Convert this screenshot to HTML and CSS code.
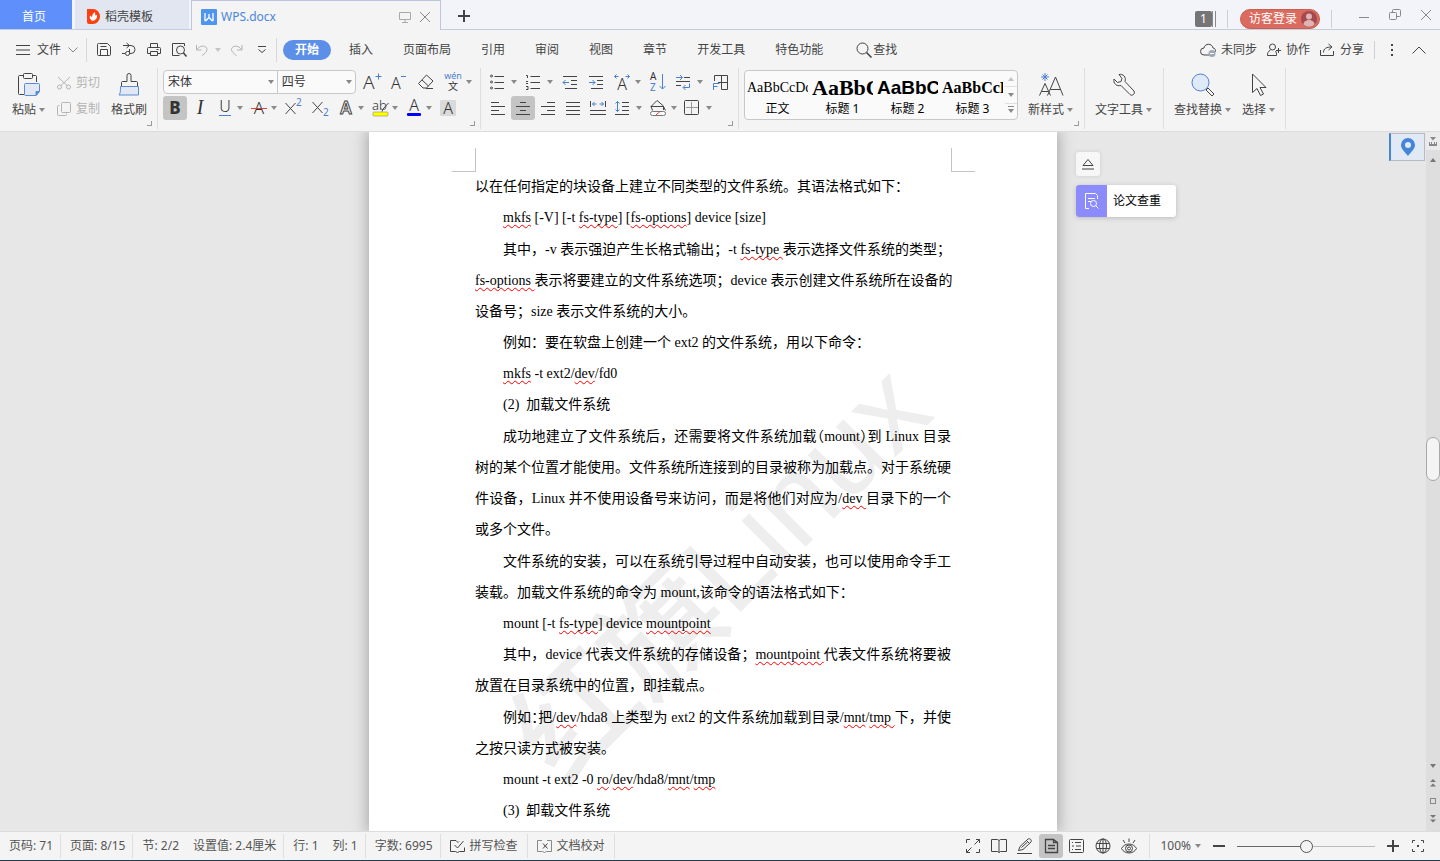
FILE: index.html
```html
<!DOCTYPE html>
<html lang="zh-CN">
<head>
  <meta charset="UTF-8">
  <meta name="viewport" content="width=device-width, initial-scale=1.0">
  <title>WPS.docx</title>
  <link rel="stylesheet" href="styles.css">
</head>
<body>
  <!-- Title bar -->
  <header class="titlebar">
    <button class="tab tab-home">首页</button>
    <button class="tab tab-docer">
      <svg width="13" height="15" viewBox="0 0 13 15"><path d="M0 0h6a7 7.500 0 0 1 0 15H2a2 2 0 0 1-2-2z" fill="#fb4012"/><path d="M6 12C2.500 10.500 2.500 8 3 6.500c1 .500 1.500 1 2 2C5 6 6 4 8 3c0 1.500.500 2 .200 3.500L10 6c.500 3-1 5-4 6z" fill="#fff"/></svg>
      <span>稻壳模板</span>
    </button>
    <div class="tab tab-doc">
      <svg width="16" height="16" viewBox="0 0 16 16"><rect width="16" height="16" rx="1" fill="#4f95f0"/><path d="M4 4v7.500h1L8 8.500l3 3h1V4M8 5v3.500" fill="none" stroke="#fff" stroke-width="1.300"/></svg>
      <span class="doc-name">WPS.docx</span>
      <button class="plain" aria-label="窗口"><svg class="icon pale" width="12" height="12" viewBox="0 0 12 12"><path d="M.5 1.500h11v7H.5zM6 8.500V11M3 11.500h6"/></svg></button>
      <button class="plain" aria-label="关闭标签"><svg class="icon grey" width="12" height="12" viewBox="0 0 12 12"><path d="M1 1l10 10M11 1L1 11"/></svg></button>
    </div>
    <button class="plain add-tab" aria-label="新建"><svg class="icon" width="12" height="12" viewBox="0 0 12 12"><path d="M6 0v12M0 6h12" stroke-width="2"/></svg></button>
    <div class="window-tools">
      <span class="badge">1</span><span class="badge-bars"></span>
      <span class="rule"></span>
      <button class="login">访客登录
        <svg width="16" height="16" viewBox="0 0 16 16"><circle cx="8" cy="8" r="8" fill="#a34a4e"/><circle cx="8" cy="5.500" r="3" fill="#e0b4b4"/><path d="M2.500 13.500c0-6 11-6 11 0a8 8 0 0 1-11 0z" fill="#e0b4b4"/></svg>
      </button>
      <span class="rule"></span>
      <div class="window-buttons">
        <button class="plain" aria-label="最小化"><svg class="icon grey" width="12" height="12" viewBox="0 0 12 12"><path d="M1 8.500h10"/></svg></button>
        <button class="plain" aria-label="还原"><svg class="icon grey" width="12" height="12" viewBox="0 0 12 12"><rect x=".5" y="3.500" width="7" height="7" rx="1"/><path d="M3.500 3.500v-2a1 1 0 0 1 1-1h6a1 1 0 0 1 1 1v5a1 1 0 0 1-1 1h-3"/></svg></button>
        <button class="plain" aria-label="关闭"><svg class="icon grey" width="12" height="12" viewBox="0 0 12 12"><path d="M1 1l10 10M11 1L1 11"/></svg></button>
      </div>
    </div>
  </header>

  <!-- Menu row -->
  <nav class="menubar">
    <button class="plain file-menu">
      <svg class="icon" width="14" height="10" viewBox="0 0 14 10"><path d="M0 .5h14M0 5h14M0 9.500h14"/></svg>
      <span>文件</span>
      <svg class="icon grey" width="10" height="6" viewBox="0 0 10 6"><path d="M.5.5L5 5 9.500.5"/></svg>
    </button>
    <div class="quick">
      <button class="tool" aria-label="保存"><svg class="icon" width="16" height="16" viewBox="0 0 16 16"><path d="M3.500 1.500h8l3 3v8a1 1 0 0 1-1 1h-11a1 1 0 0 1-1-1v-10a1 1 0 0 1 1-1zM4.500 13.500v-6h7v6M4.500 4.500h6"/></svg></button>
      <button class="tool" aria-label="输出"><svg class="icon" width="16" height="16" viewBox="0 0 16 16"><path d="M2 3.500h8a4 4 0 0 1 0 8H8M5.500 1l3 2.500-3 2.500M8.500 7v4.500a2 2 0 1 1-2-2h2M1 11.500h3"/></svg></button>
      <button class="tool" aria-label="打印"><svg class="icon" width="16" height="16" viewBox="0 0 16 16"><path d="M4.500 5V1.500h7V5M4 11.500H1.500V6.500a1 1 0 0 1 1-1h11a1 1 0 0 1 1 1v5H12M4.500 9.500h7v4h-7zM10.500 7.500h2"/></svg></button>
      <button class="tool" aria-label="打印预览"><svg class="icon" width="16" height="16" viewBox="0 0 16 16"><path d="M13.500 4v-2.500h-12v12h7"/><circle cx="9.500" cy="8" r="4"/><path d="M12.500 11l3 3.500" stroke-width="1.600"/></svg></button>
      <button class="tool drop off" aria-label="撤销"><svg class="icon" width="14" height="16" viewBox="0 0 14 16"><path d="M1.500 3v5h5M2 7.500c3-5 10-4 10 0 0 2-2 4-5 6"/></svg><i class="caret faint"></i></button>
      <button class="tool off" aria-label="恢复"><svg class="icon" width="14" height="16" viewBox="0 0 14 16"><path d="M12 3v5H7M11.500 7.500c-3-5-10-4-10 0 0 2 2 4 5 6"/></svg></button>
      <button class="tool" aria-label="更多"><svg class="icon" width="8" height="8" viewBox="0 0 8 8"><path d="M0 .5h8M.5 3.500L4 6.500l3.500-3"/></svg></button>
    </div>
    <div class="menus">
      <button class="menu active">开始</button>
      <button class="menu">插入</button>
      <button class="menu">页面布局</button>
      <button class="menu">引用</button>
      <button class="menu">审阅</button>
      <button class="menu">视图</button>
      <button class="menu">章节</button>
      <button class="menu">开发工具</button>
      <button class="menu">特色功能</button>
    </div>
    <button class="plain find"><svg class="icon" width="16" height="16" viewBox="0 0 16 16"><circle cx="6.500" cy="6.500" r="5.500"/><path d="M10.500 10.500l5 5" stroke-width="1.600"/></svg>查找</button>
    <div class="share">
      <button class="plain"><svg class="icon" width="16" height="14" viewBox="0 0 16 14"><path d="M9 12H4a3.500 3.500 0 0 1 0-7c1-5 8-5 9 0 2 0 3 2 2 4"/><circle cx="12" cy="10.500" r="3.500" fill="#9fa8b8" stroke="none"/><path d="M10 10.500h4" stroke="#fff"/></svg>未同步</button>
      <button class="plain"><svg class="icon" width="14" height="14" viewBox="0 0 14 14"><circle cx="5.500" cy="4" r="3"/><path d="M3.500 7C1 8.500.5 10 .5 12.500h9c0-2 0-3-1-4.500M9 7.500h5M11.500 5v5"/></svg>协作</button>
      <button class="plain"><svg class="icon" width="15" height="14" viewBox="0 0 15 14"><path d="M.5 7v5.500h13V8M3.500 9.500c0-4 3-5.500 8-5.500M8.500 1l3.500 3-3.500 3"/></svg>分享</button>
      <span class="rule"></span>
      <button class="plain" aria-label="菜单"><svg width="3" height="12" viewBox="0 0 3 12" fill="#444"><path d="M0 0h2v2H0zM0 5h2v2H0zM0 10h2v2H0z"/></svg></button>
      <button class="plain" aria-label="收起功能区"><svg class="icon" width="14" height="8" viewBox="0 0 14 8"><path d="M.5 7.500L7 1l6.500 6.500"/></svg></button>
    </div>
  </nav>

  <!-- Ribbon -->
  <section class="ribbon">
    <div class="group clipboard">
      <button class="big">
        <svg class="icon" width="26" height="26" viewBox="0 0 26 26"><path d="M7 3.500H3.500a1 1 0 0 0-1 1v17a1 1 0 0 0 1 1H8M17 3.500h2.500a1 1 0 0 1 1 1V10"/><rect x="7.500" y="1.500" width="9" height="5" rx="1"/><path d="M9.500 11.500h13a1 1 0 0 1 1 1v7l-3.500 4H9.500a1 1 0 0 1-1-1v-10a1 1 0 0 1 1-1z" fill="#e1e8f3" stroke="#5a8bd6"/><path d="M20 23.500v-4h3.500z" fill="#5a8bd6" stroke="#5a8bd6"/></svg>
        <span>粘贴<i class="caret"></i></span>
      </button>
      <div class="stack">
        <button class="plain off"><svg class="icon" width="16" height="16" viewBox="0 0 16 16"><circle cx="3.500" cy="12" r="2"/><circle cx="12.500" cy="12" r="2"/><path d="M2 2l9 8.500M14 2L5 10.500"/></svg>剪切</button>
        <button class="plain off"><svg class="icon" width="16" height="16" viewBox="0 0 16 16"><rect x="5.500" y="1.500" width="9" height="10" rx="1"/><path d="M3.500 4.500h-1a1 1 0 0 0-1 1v8a1 1 0 0 0 1 1h7a1 1 0 0 0 1-1v-1"/></svg>复制</button>
      </div>
      <button class="big">
        <svg class="icon" width="26" height="26" viewBox="0 0 26 26"><path d="M5.500 14v-3.500a1 1 0 0 1 1-1H11V3.500a2 2 0 0 1 4 0v6h5.500a1 1 0 0 1 1 1V14"/><path d="M4.500 14.500h18v8.500H3c1.500-2 1.500-4 1.500-8.500z" fill="#e1e8f3" stroke="#5a8bd6"/></svg>
        <span>格式刷</span>
      </button>
      <i class="launcher"></i>
    </div>

    <div class="group font">
      <div class="tools spaced">
        <select class="font-name" aria-label="字体"><option>宋体</option></select><select class="font-size" aria-label="字号"><option>四号</option></select>
        <button class="tool" aria-label="增大字号"><svg class="icon" width="20" height="20" viewBox="0 0 20 20"><text x="1" y="17" class="glyph lg">A</text><path d="M13.500 4.500h6M16.500 1.500v6" stroke="#4a7fd0"/></svg></button>
        <button class="tool" aria-label="减小字号"><svg class="icon" width="20" height="20" viewBox="0 0 20 20"><text x="2" y="17" class="glyph md">A</text><path d="M12 4.500h5" stroke="#4a7fd0"/></svg></button>
        <button class="tool" aria-label="清除格式"><svg class="icon" width="18" height="18" viewBox="0 0 18 18"><path d="M1.500 10.500l8-8.500 6.500 6-6.500 7H6zM5 7l6.500 6M9 15.500h7"/></svg></button>
        <button class="tool drop" aria-label="拼音指南"><svg class="icon" width="18" height="20" viewBox="0 0 18 20"><text x="9" y="7" text-anchor="middle" class="glyph tiny blue">wén</text><text x="9" y="18" text-anchor="middle" class="glyph xs">文</text></svg><i class="caret"></i></button>
      </div>
      <div class="tools snug">
        <button class="tool on" aria-label="加粗"><svg width="18" height="20" viewBox="0 0 18 20"><text x="9" y="16" text-anchor="middle" class="glyph bold">B</text></svg></button>
        <button class="tool" aria-label="倾斜"><svg width="18" height="20" viewBox="0 0 18 20"><text x="9" y="16" text-anchor="middle" class="glyph italic">I</text></svg></button>
        <button class="tool drop" aria-label="下划线"><svg class="icon" width="18" height="20" viewBox="0 0 18 20"><text x="9" y="14" text-anchor="middle" class="glyph md">U</text><path d="M3 17.500h12" stroke="#4a7fd0"/></svg><i class="caret"></i></button>
        <button class="tool drop" aria-label="删除线"><svg class="icon" width="18" height="20" viewBox="0 0 18 20"><text x="9" y="16" text-anchor="middle" class="glyph">A</text><path d="M1 10.500h16" stroke="#d8433b"/></svg><i class="caret"></i></button>
        <button class="tool" aria-label="上标"><svg class="icon" width="20" height="20" viewBox="0 0 20 20"><path d="M2.500 5l10 11M12.500 5l-10 11"/><text x="13" y="8" class="glyph xs blue">2</text></svg></button>
        <button class="tool wide" aria-label="下标"><svg class="icon" width="20" height="20" viewBox="0 0 20 20"><path d="M2.500 4l10 11M12.500 4l-10 11"/><text x="13" y="18" class="glyph xs blue">2</text></svg></button>
        <button class="tool drop" aria-label="文字效果"><svg class="icon" width="18" height="20" viewBox="0 0 18 20"><text x="9" y="16" text-anchor="middle" class="glyph outline">A</text></svg><i class="caret"></i></button>
        <button class="tool drop" aria-label="突出显示"><svg class="icon" width="18" height="20" viewBox="0 0 18 20"><text x="1" y="12" class="glyph sm">ab</text><path d="M17.500 5L12 11l-1 2.500"/><rect x="2" y="14" width="15" height="4" rx="1" fill="#ffff00" stroke="#777" stroke-width=".5"/></svg><i class="caret"></i></button>
        <button class="tool drop" aria-label="字体颜色"><svg class="icon" width="18" height="20" viewBox="0 0 18 20"><text x="9" y="13" text-anchor="middle" class="glyph md">A</text><rect x="2" y="15" width="14" height="3" rx="1" fill="#0000ff" stroke="none"/></svg><i class="caret"></i></button>
        <button class="tool" aria-label="字符底纹"><svg width="18" height="20" viewBox="0 0 18 20"><rect x="1" y="2" width="16" height="16" rx="1" fill="#dadada"/><text x="9" y="16" text-anchor="middle" class="glyph md">A</text></svg></button>
      </div>
      <i class="launcher"></i>
    </div>

    <div class="group paragraph">
      <div class="tools loose">
        <button class="tool drop" aria-label="项目符号"><svg class="icon" width="16" height="16" viewBox="0 0 16 16"><circle cx="2.500" cy="2" r="1"/><circle cx="2.500" cy="8" r="1"/><circle cx="2.500" cy="14" r="1"/><path d="M5.500 2.500H15M5.500 8.500H15M5.500 14.500H15"/></svg><i class="caret"></i></button>
        <button class="tool drop" aria-label="编号"><svg class="icon" width="16" height="16" viewBox="0 0 16 16"><path d="M1 1.500h1.500V4M1 7.500h2M1 9.500h2M1 12.500h2v3H1M5.500 2.500H15M5.500 8.500H15M5.500 14.500H15"/></svg><i class="caret"></i></button>
        <button class="tool" aria-label="减少缩进"><svg class="icon" width="16" height="16" viewBox="0 0 16 16"><path d="M1 2.500h14M9 6.500h6M9 10.500h6M3 14.500h12"/><path d="M1 8.500h6M3.500 6L1 8.500 3.500 11" stroke="#4a7fd0"/></svg></button>
        <button class="tool" aria-label="增加缩进"><svg class="icon" width="16" height="16" viewBox="0 0 16 16"><path d="M1 2.500h14M9 6.500h6M9 10.500h6M3 14.500h12"/><path d="M1 8.500h6M4.500 6L7 8.500 4.500 11" stroke="#4a7fd0"/></svg></button>
        <button class="tool drop" aria-label="字符缩放"><svg class="icon" width="18" height="18" viewBox="0 0 18 18"><text x="9" y="17" text-anchor="middle" class="glyph md">A</text><path d="M1.500 3.500h4M3.500 1.500l-2 2 2 2M12.500 3.500h4M14.500 1.500l2 2-2 2" stroke="#4a7fd0"/></svg><i class="caret"></i></button>
        <button class="tool" aria-label="排序"><svg class="icon" width="18" height="20" viewBox="0 0 18 20"><text x="1" y="8" class="glyph xs">A</text><text x="1" y="19" class="glyph xs blue">Z</text><path d="M13.500 2v15M10.500 14l3 3 3-3" stroke="#4a7fd0"/></svg></button>
        <button class="tool drop" aria-label="换行标记"><svg class="icon" width="16" height="16" viewBox="0 0 16 16"><path d="M9 3.500h6M1 7.500h14M1 11.500h5"/><path d="M1 3.500h6M5 1l2.500 2.500L5 6M14.500 9.500v4h-6M10.500 11l-2.500 2.500L10.500 16" stroke="#4a7fd0"/></svg><i class="caret"></i></button>
        <button class="tool" aria-label="制表位"><svg class="icon" width="17" height="17" viewBox="0 0 17 17"><path d="M2.500 7V1.500h13v14h-6M9.500 1.500v14M6 8.500h9.500"/><path d="M1.500 16V9.500h6M1.500 12.500h4" stroke="#4a7fd0"/></svg></button>
      </div>
      <div class="tools snug">
        <button class="tool" aria-label="左对齐"><svg class="icon" width="16" height="16" viewBox="0 0 16 16"><path d="M1 2.500h8M1 6.500h14M1 10.500h8M1 14.500h14"/></svg></button>
        <button class="tool on" aria-label="居中"><svg class="icon" width="16" height="16" viewBox="0 0 16 16"><path d="M5 2.500h6M1 6.500h14M5 10.500h6M1 14.500h14"/></svg></button>
        <button class="tool" aria-label="右对齐"><svg class="icon" width="16" height="16" viewBox="0 0 16 16"><path d="M7 2.500h8M1 6.500h14M7 10.500h8M1 14.500h14"/></svg></button>
        <button class="tool" aria-label="两端对齐"><svg class="icon" width="16" height="16" viewBox="0 0 16 16"><path d="M1 2.500h14M1 6.500h14M1 10.500h14M1 14.500h14"/></svg></button>
        <button class="tool" aria-label="分散对齐"><svg class="icon" width="18" height="16" viewBox="0 0 18 16"><path d="M1.500 1v6M16.500 1v6M1 10.500h16M1 14.500h16"/><path d="M3.500 4h4M5.500 2l-2 2 2 2M10.500 4h4M12.500 2l2 2-2 2" stroke="#4a7fd0"/></svg></button>
        <button class="tool drop" aria-label="行距"><svg class="icon" width="16" height="16" viewBox="0 0 16 16"><path d="M8 2.500h7M8 6.500h7M8 10.500h7M1 14.500h14"/><path d="M3.500 1.500v10M1.500 3.500l2-2 2 2M1.500 9.500l2 2 2-2" stroke="#4a7fd0"/></svg><i class="caret"></i></button>
        <button class="tool drop" aria-label="底纹颜色"><svg class="icon" width="18" height="18" viewBox="0 0 18 18"><path d="M3.500 11.500L2 7.500l6-6 6.500 5.500v4M2 7.500h12.500l2 4"/><rect x="1.500" y="12.500" width="15" height="4" rx="2" fill="#fff" stroke="#777"/><path d="M7 16l4-3.500" stroke="#d8433b"/></svg><i class="caret"></i></button>
        <button class="tool drop" aria-label="边框"><svg class="icon" width="16" height="16" viewBox="0 0 16 16"><rect x=".5" y=".5" width="14" height="14" rx="1"/><path d="M7.500 2v12M2 7.500h12" stroke="#999"/></svg><i class="caret"></i></button>
      </div>
      <i class="launcher"></i>
    </div>

    <div class="group styles">
      <div class="gallery">
        <button class="style"><b class="sample body-sample">AaBbCcDd</b>正文</button>
        <button class="style"><b class="sample h1-sample">AaBbC</b>标题 1</button>
        <button class="style"><b class="sample h2-sample">AaBbC</b>标题 2</button>
        <button class="style"><b class="sample h3-sample">AaBbCcD</b>标题 3</button>
        <div class="gallery-scroll">
          <button aria-label="上"><i class="caret up faint"></i></button>
          <button aria-label="下"><i class="caret"></i></button>
          <button aria-label="展开"><i class="caret lined"></i></button>
        </div>
      </div>
      <button class="big">
        <svg class="icon" width="26" height="26" viewBox="0 0 26 26"><path d="M1.500 23.500L7 11.500l5.500 12M3.500 19.500h7M9.500 23.500l8-18.500 7.500 18.500M12.500 17.500h10"/><path d="M7 1v8M3 5h8M4.500 2.500l5 5M9.500 2.500l-5 5" stroke="#4a7fd0"/></svg>
        <span>新样式<i class="caret"></i></span>
      </button>
      <i class="launcher"></i>
    </div>

    <div class="group text-tools">
      <button class="big">
        <svg class="icon" width="26" height="26" viewBox="0 0 26 26"><path d="M8 2.500c4-1 7.500 2.500 6 7L23 19c1.500 3-2 5.500-4 3.500L10 13.500c-4.500 1-8-2-7-6.500l3.500 3.500 3.500-1 1-3z"/></svg>
        <span>文字工具<i class="caret"></i></span>
      </button>
    </div>

    <div class="group editing">
      <button class="big">
        <svg class="icon" width="26" height="26" viewBox="0 0 26 26"><circle cx="10.500" cy="10.500" r="8.500" fill="#dfe9f8" stroke="#4a7fd0"/><path d="M16 18l2-2 6 6-2 2z"/></svg>
        <span>查找替换<i class="caret"></i></span>
      </button>
      <button class="big">
        <svg class="icon" width="26" height="26" viewBox="0 0 26 26"><path d="M6.500 2v18.500l4.500-4 3.500 7 3-1.500-3.500-6.500h6z"/></svg>
        <span>选择<i class="caret"></i></span>
      </button>
    </div>
  </section>

  <!-- Document area -->
  <main class="workspace">
    <div class="canvas">
      <article class="page">
        <div class="crop-marks"><i class="mark left"></i><i class="mark right"></i></div>
        <div class="watermark">红旗<span>Linux</span></div>
        <div class="text">
          <p class="flush">以在任何指定的块设备上建立不同类型的文件系统。其语法格式如下：</p>
          <p><u>mkfs</u> [-V] [-t <u>fs-type</u>] [<u>fs-options</u>] device [size]</p>
          <p class="long"><span class="full">其中，-v 表示强迫产生长格式输出；-t <u>fs-type </u>表示选择文件系统的类型；</span><span class="full"><u>fs-options </u>表示将要建立的文件系统选项；device 表示创建文件系统所在设备的</span>设备号；size 表示文件系统的大小。</p>
          <p>例如：要在软盘上创建一个 ext2 的文件系统，用以下命令：</p>
          <p><u>mkfs</u> -t ext2/<u>dev</u>/fd0</p>
          <p>(2)&nbsp; 加载文件系统</p>
          <p class="long"><span class="full">成功地建立了文件系统后，还需要将文件系统加载<span class="half">（</span>mount<span class="half">）</span>到 Linux 目录</span><span class="full">树的某个位置才能使用。文件系统所连接到的目录被称为加载点。对于系统硬</span><span class="full">件设备，Linux 并不使用设备号来访问，而是将他们对应为/<u>dev </u>目录下的一个</span>或多个文件。</p>
          <p class="long"><span class="full">文件系统的安装，可以在系统引导过程中自动安装，也可以使用命令手工</span>装载。加载文件系统的命令为 mount,该命令的语法格式如下：</p>
          <p>mount [-t <u>fs-type</u>] device <u>mountpoint</u></p>
          <p><span class="full">其中，device 代表文件系统的存储设备；<u>mountpoint </u>代表文件系统将要被</span>放置在目录系统中的位置，即挂载点。</p>
          <p class="long"><span class="full">例如<span class="half">：</span>把/<u>dev</u>/hda8 上类型为 ext2 的文件系统加载到目录/<u>mnt</u>/<u>tmp </u>下，并使</span>之按只读方式被安装。</p>
          <p>mount -t ext2 -0 <u>ro</u>/<u>dev</u>/hda8/<u>mnt</u>/<u>tmp</u></p>
          <p>(3)&nbsp; 卸载文件系统</p>
        </div>
      </article>
      <aside class="side">
        <div class="float-tools">
          <button class="eject" aria-label="收起"><svg class="icon" width="12" height="12" viewBox="0 0 12 12"><path d="M1 7.500l5-6 5 6zM0 11h12"/></svg></button>
          <button class="check">
            <span class="check-icon"><svg class="icon" width="16" height="18" viewBox="0 0 16 18"><path d="M5 16.500H1.500v-15h10l2 2V7M4 6.500h7M4 9.500h3" stroke="#fff"/><circle cx="9.500" cy="11.500" r="3" stroke="#fff"/><path d="M12 14l2.500 2.500" stroke="#fff"/></svg></span>
            <span class="check-label">论文查重</span>
          </button>
        </div>
        <button class="pin" aria-label="定位"><svg width="14" height="18" viewBox="0 0 14 18"><path d="M7 0a7 7 0 0 1 7 7c0 4-4 7-7 11C4 14 0 11 0 7a7 7 0 0 1 7-7zm0 4a3 3 0 1 0 0 6 3 3 0 0 0 0-6z" fill="#4585d8"/></svg></button>
      </aside>
    </div>
    <div class="scrollbar">
      <div class="ruler-toggle"><svg width="8" height="9" viewBox="0 0 8 9" fill="#888"><path d="M1 0h6L4 3.500zM0 5h1v2h1V5h1v2h2V5h1v2h1V5h1v4H0z"/></svg></div>
      <i class="caret up dark"></i>
      <div class="track"><div class="thumb"></div></div>
      <div class="jumps">
        <i class="caret dark"></i>
        <svg width="6" height="8" viewBox="0 0 6 8" fill="#777"><path d="M3 0l3 3H0zM3 4.500l3 3H0z"/></svg>
        <svg class="icon grey" width="6" height="6" viewBox="0 0 6 6"><rect x=".5" y=".5" width="5" height="5"/></svg>
        <svg width="6" height="8" viewBox="0 0 6 8" fill="#777"><path d="M0 0h6L3 3zM0 4.500h6l-3 3z"/></svg>
      </div>
    </div>
  </main>

  <!-- Status bar -->
  <footer class="statusbar">
    <div class="stats">
      <span class="stat">页码: 71</span>
      <span class="stat">页面: 8/15</span>
      <span class="stat">节: 2/2 <span>设置值: 2.4厘米</span></span>
      <span class="stat">行: 1 <span>列: 1</span></span>
      <span class="stat">字数: 6995</span>
      <button class="stat"><svg class="icon" width="16" height="14" viewBox="0 0 16 14"><path d="M6 1.500H.5v11h5l2 1 2-1h5v-4M8 3.500L6 1.500M8 3.500l1-1M4.500 6l3 3 6-7"/></svg>拼写检查</button>
      <button class="stat"><svg class="icon grey" width="16" height="14" viewBox="0 0 16 14"><path d="M5 1.500H.5v11h5l2 1 2-1h5v-11H10"/><path d="M6 4.500l4.500 5M10.500 4.500l-4.500 5" stroke="#444"/></svg>文档校对</button>
    </div>
    <div class="views">
      <button class="tool" aria-label="全屏"><svg class="icon" width="16" height="16" viewBox="0 0 16 16"><path d="M1.500 5V1.500H5M11 1.500h3.500V5M14.500 11v3.500H11M5 14.500H1.500V11M9.500 6.500l5-5M6.500 9.500l-5 5"/></svg></button>
      <button class="tool" aria-label="阅读版式"><svg class="icon" width="16" height="16" viewBox="0 0 16 16"><path d="M8 2.500v12M8 2.500L6.500 1.500h-6v12h6l1.500 1 1.500-1h6v-12h-6z"/></svg></button>
      <button class="tool" aria-label="写作模式"><svg class="icon" width="16" height="16" viewBox="0 0 16 16"><path d="M1.500 12.500L3 8.500l8-7.500c2-1 4 1 3 3l-8 7.500zM9.500 2.500l3 3M4.500 9.500l6-5.500M0 15.500h15"/></svg></button>
      <button class="tool on" aria-label="页面视图"><svg class="icon" width="16" height="16" viewBox="0 0 16 16"><path d="M2.500 1.500h8l4 3v10h-12zM10.500 1.500v3h4M5 7.500h7M5 10.500h7" stroke-width="1.300"/></svg></button>
      <button class="tool" aria-label="大纲"><svg class="icon" width="16" height="16" viewBox="0 0 16 16"><rect x=".5" y="1.500" width="14" height="13" rx="1"/><path d="M3 4.500h1M6 4.500h6M3 8h2M7 8h5M3 11.500h1M6 11.500h6"/></svg></button>
      <button class="tool" aria-label="Web 版式"><svg class="icon" width="16" height="16" viewBox="0 0 16 16"><circle cx="8" cy="8" r="7"/><ellipse cx="8" cy="8" rx="3.500" ry="7"/><path d="M1.500 5.500h13M1.500 10.500h13M8 1v14"/></svg></button>
      <button class="tool" aria-label="护眼模式"><svg class="icon" width="16" height="16" viewBox="0 0 16 16"><path d="M.5 10.500c3-6 12-6 15 0-3 6-12 6-15 0zM8 .5V4M2 2l2 3M14 2l-2 3"/><circle cx="8" cy="10.500" r="3.500"/><circle cx="8" cy="10.500" r="1.500"/></svg></button>
    </div>
    <div class="zoom">
      <button class="plain percent">100%<i class="caret"></i></button>
      <button class="plain" aria-label="缩小"><svg class="icon" width="12" height="12" viewBox="0 0 12 12"><path d="M0 6h12" stroke-width="2"/></svg></button>
      <input type="range" min="0" max="200" value="100" aria-label="缩放比例">
      <button class="plain" aria-label="放大"><svg class="icon" width="12" height="12" viewBox="0 0 12 12"><path d="M0 6h12M6 0v12" stroke-width="2"/></svg></button>
      <button class="plain" aria-label="最佳显示比例"><svg class="icon" width="14" height="14" viewBox="0 0 14 14"><path d="M1.500 4V1.500H4M10 1.500h2.500V4M12.500 10v2.500H10M4 12.500H1.500V10"/><path d="M6 6h2v2H6z" fill="#444" stroke="none"/></svg></button>
    </div>
  </footer>
</body>
</html>
```
FILE: styles.css
```css
* {
  box-sizing: border-box;
}

body {
  display: flex;
  flex-direction: column;
  height: 100vh;
  margin: 0;
  overflow: hidden;
  background: #f4f4f4;
  color: #444;
  font-family: "Noto Sans", "Noto Sans CJK SC", sans-serif;
  font-size: 12px;
  line-height: 16px;
}

button {
  padding: 0;
  border: none;
  background: none;
  color: inherit;
  font: inherit;
  white-space: nowrap;
  cursor: pointer;
}

svg {
  display: block;
  flex: none;
  overflow: visible;
}

.icon {
  fill: none;
  stroke: #444;
  stroke-width: 1;
}

.grey {
  stroke: #888;
}

.pale {
  stroke: #aaa;
}

.off {
  color: #b4b4b4;
}

.off .icon {
  stroke: #b4b4b4;
}

.plain {
  display: flex;
  align-items: center;
}

.caret {
  flex: none;
  width: 0;
  border: 3px solid transparent;
  border-top: 4px solid #8a8a8a;
  border-bottom: none;
}

.caret.faint {
  border-top-color: #c4c4c4;
}

.caret.up {
  border-top: none;
  border-bottom: 4px solid #8a8a8a;
}

.caret.up.faint {
  border-bottom-color: #c4c4c4;
}

.rule {
  width: 1px;
  height: 18px;
  background: #d0d0d4;
}

/* Title bar */
.titlebar {
  display: flex;
  flex: none;
  height: 30px;
  background: #f2f4f9;
  border-bottom: 1px solid #c5cde0;
}

.tab {
  display: flex;
  align-items: center;
}

.tab-home {
  justify-content: center;
  width: 72px;
  margin-right: 3px;
  padding: 4px 4px 0 0;
  background: #5f8ffb;
  color: #fff;
}

.tab-docer {
  gap: 5px;
  width: 114px;
  margin-right: 2px;
  padding: 4px 0 0 12px;
  background: #e1e6f0;
}

.tab-doc {
  gap: 8px;
  width: 250px;
  height: 30px;
  padding: 3px 9px 0;
  background: #f4f4f4;
  border: 1px solid #bcc6e0;
  border-bottom: none;
}

.doc-name {
  flex: 1;
  margin-left: -4px;
  color: #4a86dc;
}

.add-tab {
  margin: 2px 0 0 17px;
}

.window-tools {
  display: flex;
  align-items: center;
  margin-left: auto;
  padding: 8px 8px 0 0;
}

.window-tools .rule {
  margin: 0 12px 0 11px;
}

.badge {
  width: 17px;
  background: #757575;
  border-radius: 2px;
  color: #fff;
  text-align: center;
}

.badge-bars {
  width: 4px;
  height: 16px;
  border: 1px solid #8a8a8a;
  border-width: 0 1px;
}

.login {
  display: flex;
  align-items: center;
  gap: 4px;
  height: 20px;
  padding: 0 2px 0 8px;
  background: #db6b5e;
  border: 1px solid #c9604f;
  border-radius: 10px;
  color: #fff;
}

.window-buttons {
  display: flex;
  gap: 19px;
  margin: -8px 0 0 14px;
}

/* Menu row */
.menubar {
  display: flex;
  flex: none;
  align-items: center;
  height: 38px;
  padding: 2px 14px 0 16px;
}

.file-menu {
  gap: 7px;
  height: 24px;
  padding-right: 8px;
  border-right: 1px solid #d8d8d8;
}

.quick {
  display: flex;
  align-items: center;
  gap: 1px;
  height: 24px;
  padding: 0 2px 0 5px;
  border-right: 1px solid #d8d8d8;
}

.menus {
  display: flex;
  margin-left: 3px;
}

.menu {
  height: 20px;
  padding: 0 15px;
}

.menu.active {
  margin: 0 3px;
  padding: 0 12px;
  background: #5b8fe8;
  border-radius: 10px;
  color: #fff;
  font-weight: bold;
}

.find {
  gap: 1px;
  margin-left: 18px;
}

.share {
  display: flex;
  align-items: center;
  gap: 10px;
  margin-left: auto;
}

.share .plain {
  gap: 5px;
}

.share .rule + .plain {
  padding: 0 8px 0 6px;
}

/* Ribbon */
.ribbon {
  display: flex;
  flex: none;
  height: 64px;
  padding-bottom: 2px;
  border-bottom: 1px solid #dcdcdc;
}

.group {
  position: relative;
  flex: none;
  padding: 2px 5px;
  border-right: 1px solid #dedede;
}

.launcher {
  position: absolute;
  right: 5px;
  bottom: 3px;
  width: 5px;
  height: 5px;
  border: 1px solid #999;
  border-width: 0 1px 1px 0;
}

.big {
  display: flex;
  flex-direction: column;
  align-items: center;
  gap: 4px;
  padding-top: 2px;
}

.big span {
  display: flex;
  align-items: center;
  gap: 3px;
}

.stack {
  display: flex;
  flex-direction: column;
  gap: 10px;
  padding-top: 5px;
}

.stack .plain {
  gap: 4px;
}

.clipboard {
  display: flex;
  align-items: flex-start;
  gap: 11px;
  width: 158px;
  padding-left: 12px;
}

.font {
  width: 323px;
}

.paragraph {
  width: 258px;
}

.tools {
  display: flex;
  align-items: center;
  height: 24px;
}

.tools + .tools {
  margin-top: 2px;
}

.tools.spaced {
  gap: 3px;
}

.tools.loose {
  gap: 2px;
}

.tools.snug {
  gap: 1px;
}

.tool {
  display: flex;
  flex: none;
  align-items: center;
  justify-content: center;
  width: 24px;
  height: 24px;
}

.tool.drop {
  justify-content: space-between;
  width: 34px;
  padding: 0 3px;
}

.quick .tool.drop {
  width: 32px;
}

.font .snug .tool.drop {
  width: 33px;
}

.tool.wide {
  width: 27px;
}

.tool.on {
  background: #c4c4c4;
  border-radius: 3px;
}

.glyph {
  fill: #333;
  stroke: none;
  font-size: 17px;
  font-weight: 300;
}

.glyph.lg {
  font-size: 19px;
}

.glyph.md {
  font-size: 16px;
}

.glyph.sm {
  font-size: 13px;
}

.glyph.xs {
  font-size: 10px;
  font-weight: 400;
}

.glyph.tiny {
  font-size: 9px;
  font-weight: 400;
}

.glyph.bold {
  font-weight: 800;
}

.glyph.italic {
  font-family: "Liberation Serif", serif;
  font-size: 20px;
  font-style: italic;
}

.glyph.outline {
  fill: #f4f4f4;
  stroke: #444;
  font-weight: 600;
}

.glyph.blue {
  fill: #4a7fd0;
}

select {
  height: 24px;
  padding: 0 4px;
  border: 1px solid #c8c8c8;
  background: url("data:image/svg+xml,%3Csvg xmlns='http://www.w3.org/2000/svg' width='6' height='4'%3E%3Cpath d='M0 0h6L3 4z' fill='%23888'/%3E%3C/svg%3E") no-repeat right 3px center #fafafa;
  color: #333;
  font: inherit;
  appearance: none;
}

.font-name {
  width: 116px;
  margin-right: -4px;
  border-radius: 4px 0 0 4px;
}

.font-size {
  width: 80px;
  margin-right: 1px;
  border-radius: 0 4px 4px 0;
}

.styles {
  display: flex;
  align-items: flex-start;
  gap: 10px;
  width: 346px;
}

.gallery {
  display: flex;
  width: 274px;
  height: 50px;
  background: #fafafa;
  border: 1px solid #c8c8c8;
  border-radius: 4px;
}

.style {
  display: flex;
  flex-direction: column;
  align-items: center;
  width: 65px;
  padding: 2px;
  color: #000;
}

.sample {
  width: 61px;
  height: 30px;
  overflow: hidden;
  font-weight: bold;
  line-height: 30px;
  text-align: left;
}

.body-sample {
  font-family: "Liberation Serif", serif;
  font-size: 14px;
  font-weight: normal;
}

.h1-sample {
  font-family: "Liberation Serif", serif;
  font-size: 22px;
}

.h2-sample {
  font-family: "Liberation Sans", sans-serif;
  font-size: 19px;
}

.h3-sample {
  font-family: "Liberation Serif", serif;
  font-size: 16px;
}

.gallery-scroll {
  display: flex;
  flex: 1;
  flex-direction: column;
}

.gallery-scroll button {
  display: flex;
  flex: 1;
  align-items: center;
  justify-content: center;
}

.gallery-scroll button + button {
  border-top: 1px solid #e0e0e0;
}

.caret.lined {
  position: relative;
}

.caret.lined::before {
  position: absolute;
  top: -7px;
  left: -3px;
  width: 6px;
  height: 1px;
  background: #8a8a8a;
  content: "";
}

.text-tools,
.editing {
  display: flex;
  align-items: flex-start;
}

.text-tools {
  width: 79px;
  padding-left: 10px;
}

.editing {
  gap: 11px;
  width: 122px;
  padding-left: 10px;
}

/* Document area */
.workspace {
  display: flex;
  flex: 1;
  min-height: 0;
}

.canvas {
  display: grid;
  flex: 1;
  grid-template-columns: 1fr 688px 1fr;
  overflow: hidden;
  background: #e7e7e7;
}

.page {
  position: relative;
  grid-column: 2;
  background: #fff;
  box-shadow: 0 0 14px 2px #a8a8a8;
}

.crop-marks {
  display: flex;
  justify-content: space-between;
  height: 23px;
  margin: 16px 82px 0 83px;
}

.mark {
  width: 24px;
  height: 24px;
  border: 0 solid #c4c4c4;
  border-bottom-width: 1px;
}

.mark.left {
  border-right-width: 1px;
}

.mark.right {
  border-left-width: 1px;
}

.watermark {
  position: absolute;
  top: 352px;
  left: 68px;
  width: 560px;
  color: #eee;
  font-family: "Noto Sans CJK SC", sans-serif;
  font-size: 120px;
  font-weight: 500;
  line-height: 160px;
  text-align: center;
  white-space: nowrap;
  transform: rotate(-45deg);
}

.watermark span {
  font-family: "Liberation Sans", sans-serif;
}

.text {
  position: relative;
  padding: 0 106px;
  color: #000;
  font-family: "Liberation Serif", "Noto Sans CJK SC", serif;
  font-size: 14px;
  line-height: 31px;
}

.text p {
  margin: 0;
  text-indent: 28px;
  white-space: nowrap;
}

.text p.flush {
  text-indent: 0;
}

.text p.long {
  margin-top: 1px;
}

/* lines that run to the right margin */
.full {
  display: block;
  text-align-last: justify;
}

.full ~ .full {
  text-indent: 0;
}

.half {
  font-feature-settings: "halt";
}

.text u {
  text-decoration: underline wavy #f00 1px;
  text-decoration-skip-ink: none;
  text-underline-offset: 2px;
}

.side {
  display: flex;
  align-items: flex-start;
  justify-content: space-between;
  padding: 1px 1px 0 19px;
}

.float-tools {
  display: flex;
  flex-direction: column;
  gap: 9px;
  padding-top: 19px;
}

.eject {
  display: flex;
  align-items: center;
  justify-content: center;
  width: 24px;
  height: 24px;
  background: #f7f7f7;
  border-radius: 3px;
  box-shadow: 0 0 4px #ccc;
}

.check {
  display: flex;
  width: 100px;
  height: 32px;
  overflow: hidden;
  background: #fff;
  border-radius: 3px;
  box-shadow: 0 1px 5px #bbb;
  color: #000;
  line-height: 32px;
}

.check-icon {
  display: flex;
  align-items: center;
  justify-content: center;
  width: 31px;
  height: 32px;
  background: #8c8bfb;
}

.check-label {
  padding-left: 6px;
}

.pin {
  display: flex;
  align-items: center;
  justify-content: center;
  width: 36px;
  height: 28px;
  background: #e1e9f4;
  border: 1px solid #b4bac6;
  border-left: 2px solid #4585d8;
}

.scrollbar {
  display: flex;
  flex-direction: column;
  align-items: center;
  width: 14px;
  background: #dedede;
}

.ruler-toggle {
  display: flex;
  align-items: center;
  justify-content: center;
  width: 14px;
  height: 18px;
  margin-bottom: 8px;
  background: #ebebeb;
}

.caret.dark {
  border-top-color: #777;
  border-bottom-color: #777;
}

.track {
  flex: 1;
  padding-top: 275px;
}

.thumb {
  width: 14px;
  height: 44px;
  background: #f4f4f4;
  border: 1px solid #a8a8a8;
  border-radius: 7px;
}

.jumps {
  display: flex;
  flex-direction: column;
  align-items: center;
  gap: 11px;
  padding-bottom: 8px;
}

/* Status bar */
.statusbar {
  display: flex;
  flex: none;
  align-items: center;
  height: 30px;
  border-top: 1px solid #dcdcdc;
  border-bottom: 1px solid #1d3d52;
  color: #555;
}

.stats {
  display: flex;
}

.stat {
  display: flex;
  gap: 14px;
  align-items: center;
  height: 24px;
  padding: 0 7px 0 9px;
  border-right: 1px solid #dedede;
}

button.stat {
  gap: 4px;
  padding-right: 9px;
}

.views {
  display: flex;
  gap: 2px;
  margin-left: auto;
  padding-right: 8px;
  border-right: 1px solid #dedede;
}

.zoom {
  display: flex;
  align-items: center;
  gap: 12px;
  padding: 0 15px 0 10px;
}

.percent {
  gap: 4px;
}

input[type="range"] {
  width: 138px;
  height: 14px;
  margin: 0;
  background: linear-gradient(90deg, #666 50%, #bbb 50%) center / 100% 1px no-repeat;
  appearance: none;
}

input[type="range"]::-webkit-slider-thumb {
  width: 13px;
  height: 13px;
  background: #f4f4f4;
  border: 1px solid #555;
  border-radius: 50%;
  appearance: none;
}
```
